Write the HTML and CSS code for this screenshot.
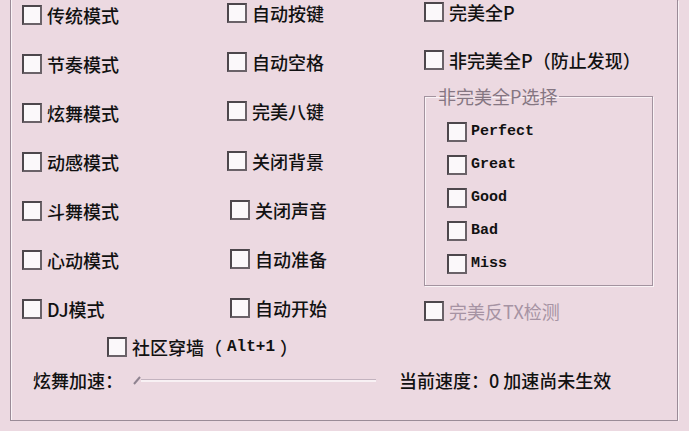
FILE: index.html
```html
<!DOCTYPE html>
<html>
<head>
  <meta charset="utf-8" />
  <title>炫舞助手</title>
  <meta name="viewport" content="width=device-width, initial-scale=1">
  <link rel="stylesheet" href="styles.css">
</head>
<body>
  <div class="frame">
    <div class="cols">
      <!-- 模式 -->
      <div class="col col-mode">
        <label class="opt"><span class="box"></span>传统模式</label>
        <label class="opt"><span class="box"></span>节奏模式</label>
        <label class="opt"><span class="box"></span>炫舞模式</label>
        <label class="opt"><span class="box"></span>动感模式</label>
        <label class="opt"><span class="box"></span>斗舞模式</label>
        <label class="opt"><span class="box"></span>心动模式</label>
        <label class="opt"><span class="box"></span>DJ模式</label>
      </div>
      <!-- 自动 -->
      <div class="col col-auto">
        <label class="opt"><span class="box"></span>自动按键</label>
        <label class="opt"><span class="box"></span>自动空格</label>
        <label class="opt"><span class="box"></span>完美八键</label>
        <label class="opt"><span class="box"></span>关闭背景</label>
        <label class="opt nudge"><span class="box"></span>关闭声音</label>
        <label class="opt nudge"><span class="box"></span>自动准备</label>
        <label class="opt nudge"><span class="box"></span>自动开始</label>
      </div>
      <!-- 完美 -->
      <div class="col col-perfect">
        <label class="opt"><span class="box"></span>完美全P</label>
        <label class="opt p-safe"><span class="box"></span>非完美全P（防止发现）</label>
        <fieldset class="judge">
          <legend>非完美全P选择</legend>
          <label class="opt en"><span class="box"></span>Perfect</label>
          <label class="opt en"><span class="box"></span>Great</label>
          <label class="opt en"><span class="box"></span>Good</label>
          <label class="opt en"><span class="box"></span>Bad</label>
          <label class="opt en"><span class="box"></span>Miss</label>
        </fieldset>
        <label class="opt off"><span class="box"></span>完美反TX检测</label>
      </div>
    </div>

    <label class="opt wall"><span class="box"></span>社区穿墙（<span class="mono">Alt+1</span>）</label>

    <div class="speed">
      <span>炫舞加速：</span>
      <div class="slider">
        <svg class="thumb" width="8" height="12" viewBox="0 0 8 12">
          <line x1="1" y1="10" x2="7" y2="3" stroke="#8f8390" stroke-width="2" />
        </svg>
        <div class="track"></div>
      </div>
      <span class="speed-now">当前速度：0 加速尚未生效</span>
    </div>
  </div>
</body>
</html>
```

FILE: styles.css
```css
html, body {
  margin: 0px;
  padding: 0px;
}
body {
  background: #ecd9e1;
  color: #111;
  font-family: "Noto Sans CJK SC", "Noto Sans", sans-serif;
  font-size: 18px;
  font-weight: 500;
  line-height: 20px;
}
.frame {
  box-sizing: border-box;
  width: 668px;
  height: 421px;
  margin-left: 10px;
  padding: 2px 0 0 11px;
  border: 1px solid #9a8b97;
  border-top: none;
  box-shadow: inset 1px 0 0 #faf3f6, 1px 1px 0 #faf3f6;
}
.cols {
  display: flex;
}
.col {
  display: flex;
  flex-direction: column;
}
.col-mode {
  width: 205px;
  padding-top: 3px;
  gap: 29px;
}
.col-auto {
  width: 197px;
  padding-top: 1px;
  gap: 29.2px;
}
.col-perfect {
  width: 229px;
}

.opt {
  display: flex;
  align-items: center;
  gap: 5px;
  height: 20px;
  white-space: nowrap;
}
.box {
  box-sizing: border-box;
  flex: none;
  width: 20px;
  height: 20px;
  background: #fbf8fa;
  border: 2px solid #4d474c;
  border-right-color: #6a6268;
  border-bottom-color: #6a6268;
}
.nudge {
  padding-left: 3px;
}
.p-safe {
  margin-top: 28px;
}

.judge {
  margin: 16px 0 0 0;
  padding: 16px 0 11px 0;
  border: 1px solid #a3939f;
  box-shadow: inset 1px 1px 0 #faf3f6, 1px 1px 0 #faf3f6;
  display: flex;
  flex-direction: column;
  gap: 13px;
}
.judge legend {
  margin-left: 11px;
  padding: 0 2px;
  color: #857682;
  font-weight: 400;
}
.judge .opt {
  margin-left: 22px;
}
.en, .mono {
  font-family: "Liberation Mono", monospace;
  font-weight: bold;
  font-size: 15px;
}
.mono {
  font-size: 16px;
}
.en {
  gap: 4px;
}
.off {
  margin-top: 15px;
  color: #a693a3;
  font-weight: 400;
}

.wall {
  margin: 16px 0 0 85px;
}

.speed {
  display: flex;
  align-items: center;
  height: 20px;
  margin-top: 13px;
  padding-left: 11px;
}
.slider {
  display: flex;
  align-items: center;
  margin-left: 10px;
}
.thumb {
  display: block;
}
.track {
  width: 235px;
  height: 0;
  border-top: 1px solid #c3b3bf;
  border-bottom: 2px solid #f8f1f4;
}
.speed-now {
  margin-left: 23px;
}
```
